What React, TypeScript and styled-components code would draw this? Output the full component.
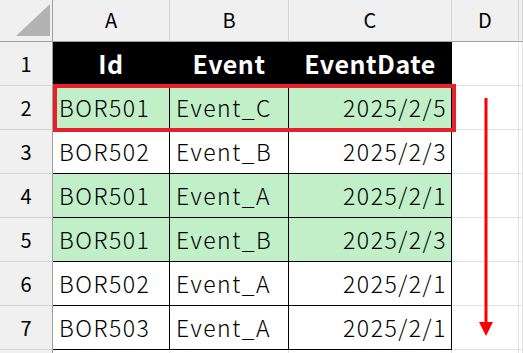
import styled, { createGlobalStyle } from "styled-components";

const GlobalStyle = createGlobalStyle`
  html, body {
    margin: 0;
    padding: 0;
    background: #ffffff;
    overflow: hidden;
  }
  body {
    font-family: "Noto Sans CJK JP", "Noto Sans", sans-serif;
  }
`;

type Row = { id: string; event: string; date: string; hit: boolean };

const rows: Row[] = [
  { id: "BOR501", event: "Event_C", date: "2025/2/5", hit: true },
  { id: "BOR502", event: "Event_B", date: "2025/2/3", hit: false },
  { id: "BOR501", event: "Event_A", date: "2025/2/1", hit: true },
  { id: "BOR501", event: "Event_B", date: "2025/2/3", hit: true },
  { id: "BOR502", event: "Event_A", date: "2025/2/1", hit: false },
  { id: "BOR503", event: "Event_A", date: "2025/2/1", hit: false },
];

const columns = ["A", "B", "C", "D", ""];

export default function App() {
  return (
    <>
      <GlobalStyle />
      <Wrapper>
        <Sheet>
          <Corner>
            <svg width="52" height="41" viewBox="0 0 52 41">
              <polygon points="16,36 50,36 50,4" fill="#b3b3b3" />
            </svg>
          </Corner>
          {columns.map((c, i) => (
            <ColHead key={i}>{c}</ColHead>
          ))}

          <RowHead>1</RowHead>
          <HeadCell>Id</HeadCell>
          <HeadCell>Event</HeadCell>
          <HeadCell>EventDate</HeadCell>
          <Empty />
          <Empty />

          {rows.map((r, i) => (
            <RowGroup key={i}>
              <RowHead>{i + 2}</RowHead>
              <DataCell $fill={r.hit}>{r.id}</DataCell>
              <DataCell $fill={r.hit}>{r.event}</DataCell>
              <DataCell $fill={r.hit} $right>
                {r.date}
              </DataCell>
              <Empty />
              <Empty />
            </RowGroup>
          ))}

          <RowHead />
          <Empty />
          <Empty />
          <Empty />
          <Empty />
          <Empty />
        </Sheet>

        <Highlight />
        <Arrow width="16" height="240" viewBox="0 0 16 240">
          <rect x="6.5" y="0" width="3" height="226" fill="#ff0000" />
          <polygon points="1,224 15,224 8,238" fill="#ff0000" />
        </Arrow>
      </Wrapper>
    </>
  );
}

const Wrapper = styled.div`
  position: relative;
  width: 523px;
  height: 353px;
  overflow: hidden;
`;

const Sheet = styled.div`
  display: grid;
  grid-template-columns: 53px 117px 119px 163px 67px 1fr;
  grid-template-rows: 42px repeat(8, 44px);
  width: 523px;
`;

const RowGroup = styled.div`
  display: contents;
`;

const Corner = styled.div`
  background: #f0f0f0;
  border-right: 1px solid #9f9f9f;
  border-bottom: 1px solid #9f9f9f;
  box-sizing: border-box;
  display: flex;
  align-items: flex-start;
  justify-content: flex-start;
`;

const ColHead = styled.div`
  background: #f0f0f0;
  border-right: 1px solid #d4d4d4;
  border-bottom: 1px solid #9f9f9f;
  box-sizing: border-box;
  display: flex;
  align-items: center;
  justify-content: center;
  font-size: 20px;
  color: #000000;
  padding-bottom: 2px;
`;

const RowHead = styled.div`
  background: #f0f0f0;
  border-right: 1px solid #9f9f9f;
  border-bottom: 1px solid #d4d4d4;
  box-sizing: border-box;
  display: flex;
  align-items: center;
  justify-content: center;
  font-size: 20px;
  color: #000000;
`;

const HeadCell = styled.div`
  background: #000000;
  color: #ffffff;
  font-weight: 700;
  font-size: 25px;
  letter-spacing: 0.5px;
  box-sizing: border-box;
  border-right: 1px solid #000000;
  border-bottom: 1px solid #000000;
  display: flex;
  align-items: center;
  justify-content: center;
  padding-bottom: 2px;
`;

const DataCell = styled.div<{ $fill?: boolean; $right?: boolean }>`
  background: ${(p) => (p.$fill ? "#c1f0c8" : "#ffffff")};
  color: #000000;
  font-size: 23px;
  font-weight: 300;
  letter-spacing: 1.5px;
  box-sizing: border-box;
  border-right: 1px solid #000000;
  border-bottom: 1px solid #000000;
  display: flex;
  align-items: center;
  justify-content: ${(p) => (p.$right ? "flex-end" : "flex-start")};
  padding: 0 4px 2px 6px;
  white-space: nowrap;
`;

const Empty = styled.div`
  background: #ffffff;
  box-sizing: border-box;
  border-right: 1px solid #e1e1e1;
  border-bottom: 1px solid #e1e1e1;
`;

const Highlight = styled.div`
  position: absolute;
  left: 53px;
  top: 84px;
  width: 403px;
  height: 48px;
  box-sizing: border-box;
  border: 4px solid #e8202a;
  pointer-events: none;
`;

const Arrow = styled.svg`
  position: absolute;
  left: 478px;
  top: 98px;
`;
